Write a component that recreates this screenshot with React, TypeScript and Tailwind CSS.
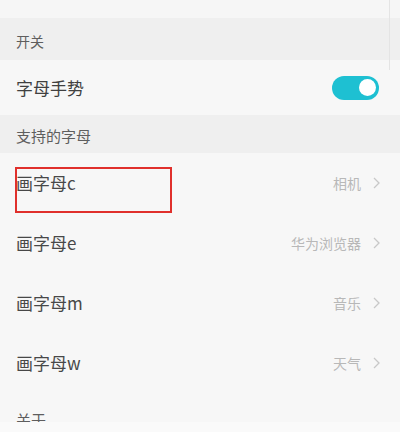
import React from "react";

const font = { fontFamily: '"Noto Sans CJK SC", "Noto Sans", sans-serif' };

function Chevron() {
  return (
    <svg width="7" height="12" viewBox="0 0 7 12" className="ml-[12px]">
      <path d="M1 1 L6 6 L1 11" fill="none" stroke="#c8c8c8" strokeWidth="1.3" />
    </svg>
  );
}

function LetterRow({ letter, value }: { letter: string; value: string }) {
  return (
    <div className="flex h-[60px] items-center justify-between pl-[16px] pr-[20px]">
      <span className="text-[17px] text-[#484848]">画字母{letter}</span>
      <span className="flex items-center text-[14px] text-[#b8b8b8]">
        {value}
        <Chevron />
      </span>
    </div>
  );
}

export default function App() {
  return (
    <div className="relative flex h-[432px] w-[400px] flex-col overflow-hidden bg-[#f7f7f7]" style={font}>
      <div className="h-[18px] shrink-0 bg-[#f6f6f6]" />
      <div className="flex h-[42px] shrink-0 items-end bg-[#efefef] pb-[8px] pl-[16px] text-[14px] text-[#5e5e5e]">
        开关
      </div>
      <div className="flex h-[55px] shrink-0 items-center justify-between bg-[#f7f7f7] pl-[16px] pr-[21px]">
        <span className="text-[17px] text-[#404040]">字母手势</span>
        <div className="flex h-[24px] w-[47px] items-center justify-end rounded-full bg-[#1ec0d2] pr-[3px]">
          <div className="h-[17px] w-[17px] rounded-full bg-white" />
        </div>
      </div>
      <div className="flex h-[38px] shrink-0 items-end bg-[#efefef] pb-[6px] pl-[16px] text-[15px] text-[#5e5e5e]">
        支持的字母
      </div>
      <LetterRow letter="c" value="相机" />
      <LetterRow letter="e" value="华为浏览器" />
      <LetterRow letter="m" value="音乐" />
      <LetterRow letter="w" value="天气" />
      <div className="h-[29px] shrink-0 overflow-hidden bg-[#f7f7f7] pl-[16px] pt-[19px]">
        <div className="text-[15px] leading-[15px] text-[#5e5e5e]">关于</div>
      </div>
      <div className="flex-1 bg-[#fafafa]" />
      <div className="absolute left-[15px] top-[167px] h-[46px] w-[157px] border-2 border-[#e0302c]" />
      <div className="absolute right-[10px] top-0 h-[70px] w-[1px] bg-[#e4e4e4]" />
    </div>
  );
}
